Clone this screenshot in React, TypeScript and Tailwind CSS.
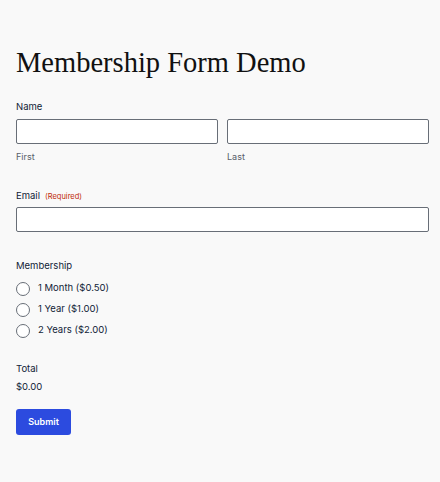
import React from "react"

const labelCls = "text-[9.5px] leading-[14px] text-[#112337]"

const plans = ["1 Month ($0.50)", "1 Year ($1.00)", "2 Years ($2.00)"]

export default function App() {
  return (
    <div
      className="min-h-[482px] w-[440px] bg-[#f9f9f9] pl-4 pr-[11px] pt-[46px]"
      style={{ fontFamily: "Inter, 'Noto Sans', sans-serif" }}
    >
      <h1
        className="text-[28.5px] leading-[34px] text-[#111]"
        style={{ fontFamily: "'Liberation Serif', 'DejaVu Serif', serif" }}
      >
        Membership Form Demo
      </h1>

      <form className="mt-[20px]" onSubmit={(e) => e.preventDefault()}>
        <div className={labelCls}>Name</div>
        <div className="mt-[5px] grid grid-cols-2 gap-[9px]">
          <div>
            <input className="block h-[25px] w-full rounded-[2px] border border-[#686e77] bg-white" />
            <div className="mt-[7px] text-[9px] leading-[12px] text-[#585e6a]">First</div>
          </div>
          <div>
            <input className="block h-[25px] w-full rounded-[2px] border border-[#686e77] bg-white" />
            <div className="mt-[7px] text-[9px] leading-[12px] text-[#585e6a]">Last</div>
          </div>
        </div>

        <div className={`mt-[26px] flex items-baseline gap-[5px] ${labelCls}`}>
          Email
          <span className="text-[7.5px] text-[#c02b0a]">(Required)</span>
        </div>
        <input className="mt-[3px] block h-[25px] w-full rounded-[2px] border border-[#686e77] bg-white" />

        <div className={`mt-[27px] ${labelCls}`}>Membership</div>
        <div className="mt-[5px] flex flex-col">
          {plans.map((p) => (
            <label key={p} className="flex h-[21px] items-center gap-[8px]">
              <span className="h-[14px] w-[14px] shrink-0 rounded-full border border-[#686e77] bg-white" />
              <span className="text-[9.5px] text-[#112337]">{p}</span>
            </label>
          ))}
        </div>

        <div className={`mt-[21px] ${labelCls}`}>Total</div>
        <div className="mt-[4px] text-[9.5px] leading-[14px] text-[#112337]">$0.00</div>

        <button
          type="submit"
          className="mt-[15px] h-[26px] w-[55px] rounded-[3px] bg-[#2c4bdf] text-[9px] font-semibold text-white"
        >
          Submit
        </button>
      </form>
    </div>
  )
}
